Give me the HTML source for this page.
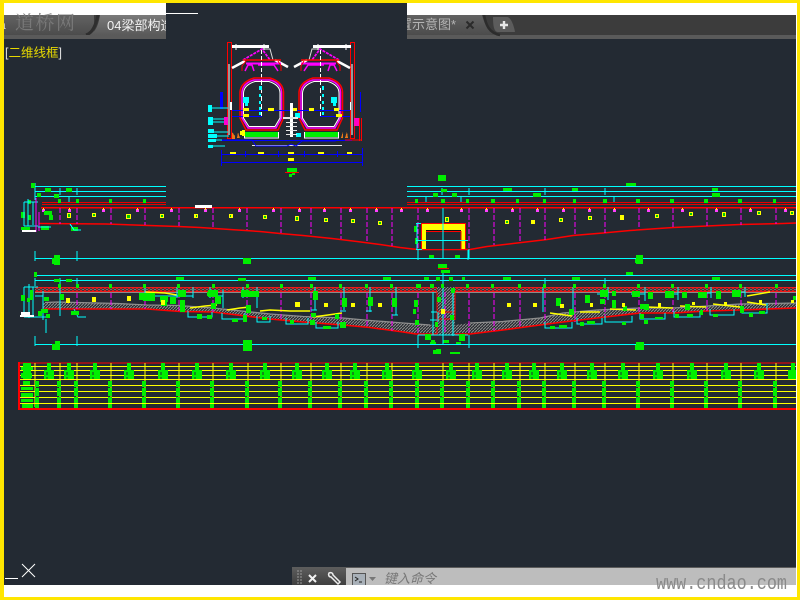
<!DOCTYPE html>
<html lang="zh">
<head>
<meta charset="utf-8">
<title>CAD</title>
<style>
html,body{margin:0;padding:0;width:800px;height:600px;overflow:hidden;background:#232a33}
svg{display:block;position:absolute;left:0;top:0}
</style>
</head>
<body>
<svg width="800" height="600" viewBox="0 0 800 600" xmlns="http://www.w3.org/2000/svg" fill="none">
<defs>
<linearGradient id="tab" x1="0" y1="0" x2="0" y2="1"><stop offset="0" stop-color="#7a7a7a"/><stop offset="1" stop-color="#5a5a5a"/></linearGradient>
<linearGradient id="tab2" x1="0" y1="0" x2="0" y2="1"><stop offset="0" stop-color="#626262"/><stop offset="1" stop-color="#4c4c4c"/></linearGradient>
<linearGradient id="cmd" x1="0" y1="0" x2="0" y2="1"><stop offset="0" stop-color="#5c5c5c"/><stop offset="1" stop-color="#3f3f3f"/></linearGradient>
<pattern id="ha" width="4" height="2" patternUnits="userSpaceOnUse"><rect width="4" height="2" fill="#4a3036"/><rect width="2" height="1" fill="#d02020"/><rect x="2" y="1" width="2" height="1" fill="#6e6e6e"/></pattern>
<pattern id="hb" width="3" height="3" patternUnits="userSpaceOnUse"><rect width="3" height="3" fill="#2a2d33"/><path d="M0 3L3 0" stroke="#8a8a8a" stroke-width="1"/></pattern>
</defs>

<!-- tab bar -->
<rect x="4" y="15" width="793" height="24" fill="#3c3c3c"/>
<rect x="4" y="15" width="90" height="20" fill="url(#tab2)"/>
<path d="M85 35C94 35 98 28 100 15H166V35Z" fill="url(#tab)"/>
<path d="M86 35C93 33 96 24 98 15" stroke="#2e2e2e" stroke-width="3"/>
<rect x="4" y="35" width="793" height="4" fill="#5a5a5a"/>
<path d="M400 15H482C485 25 488 33 497 35H400Z" fill="url(#tab2)"/>
<path d="M484 15C486 25 489 33 500 35" stroke="#2c2c2c" stroke-width="2.500"/>
<path d="M493 17H507C511 17 514 26 515 32H498C494 32 493 26 493 17Z" fill="#5c5c5c"/>
<path d="M504 21v8M500 25h8" stroke="#e6e6e6" stroke-width="2.400"/>
<path d="M466.500 21.500l7 7M473.500 21.500l-7 7" stroke="#2a2a2a" stroke-width="2"/>
<text x="-1" y="29" fill="#ddd" font-size="12" font-family="Liberation Sans,Noto Sans CJK SC,sans-serif">a</text>
<text x="107" y="30" fill="#f2f2f2" font-size="13" font-family="Liberation Sans,Noto Sans CJK SC,sans-serif">04梁部构造</text>
<text x="456" y="29" text-anchor="end" fill="#b4b4b4" font-size="13" font-family="Liberation Sans,Noto Sans CJK SC,sans-serif">布置示意图*</text>

<!-- view label -->
<text x="5" y="57" fill="#ddd" font-size="12.500" font-family="Liberation Sans,Noto Sans CJK SC,sans-serif">[<tspan fill="#e6d800">二维线框</tspan>]</text>

<g shape-rendering="crispEdges">
<!-- top elevation -->
<path d="M35 186.500H800M35 191.500H800M35 196.500H800" stroke="#00ffff"/>
<path d="M35 183V200M60 188V195M77 188V195M69 197V203M442 188V195M469 188V195M426 197V203M461 197V203M545 188V195M605 188V195M614 197V203" stroke="#00ffff"/>
<path d="M42 202.500H797M42 204.500H797" stroke="#e60000"/>
<path d="M41 207.500H797" stroke="#ff0000" stroke-width="1.500"/>
<path d="M39 223.500L106 224L149 225.500L178 226.500L200 227.500L230 229.500L260 231.500L280 233.500L303 235.500L332 238.500L357 241.500L380 244.500L400 247.500L417 249.500H470L487 246.500L513 243.500L547 239.500L573 235.500L603 233L630 230.500L673 227.500L707 226L740 224.500L783 223.500L796 223" stroke="#ff0000" stroke-width="1.500" shape-rendering="auto"/>
<path d="M60 208V224M77 208V224M111 208V224M145 208V225M179 208V226M213 208V228M247 208V230M281 208V233M311 208V236M341 208V239M367 208V242M392 208V246M418 208V249M443 208V249M469 208V249M494 208V245M520 208V242M545 208V240M575 208V236M605 208V233M639 208V229M673 208V227M707 208V226M741 208V225M776 208V224" stroke="#ff00ff" stroke-dasharray="5 2"/>
<!-- bolt dots -->
<path d="M42 209h3v3h-3zM68 209h3v3h-3zM102 209h3v3h-3zM136 209h3v3h-3zM170 209h3v3h-3zM204 209h3v3h-3zM238 209h3v3h-3zM272 209h3v3h-3zM298 209h3v3h-3zM323 209h3v3h-3zM349 209h3v3h-3zM375 209h3v3h-3zM400 209h3v3h-3zM426 209h3v3h-3zM460 209h3v3h-3zM485 209h3v3h-3zM511 209h3v3h-3zM536 209h3v3h-3zM562 209h3v3h-3zM588 209h3v3h-3zM613 209h3v3h-3zM647 209h3v3h-3zM681 209h3v3h-3zM715 209h3v3h-3zM749 209h3v3h-3zM784 209h3v3h-3z" fill="#ff40ff"/>
<path d="M43 208h1v2h-1zM69 208h1v2h-1zM103 208h1v2h-1zM137 208h1v2h-1zM171 208h1v2h-1zM205 208h1v2h-1zM239 208h1v2h-1zM273 208h1v2h-1zM299 208h1v2h-1zM324 208h1v2h-1zM350 208h1v2h-1zM376 208h1v2h-1zM401 208h1v2h-1zM427 208h1v2h-1zM461 208h1v2h-1zM486 208h1v2h-1zM512 208h1v2h-1zM537 208h1v2h-1zM563 208h1v2h-1zM589 208h1v2h-1zM614 208h1v2h-1zM648 208h1v2h-1zM682 208h1v2h-1zM716 208h1v2h-1zM750 208h1v2h-1zM785 208h1v2h-1z" fill="#ffff00"/>
<!-- yellow squares -->
<path d="M67 213h4v5h-4zM92 213h4v4h-4zM126 214h5v5h-5zM160 214h4v4h-4zM194 214h4v4h-4zM229 214h4v4h-4zM263 215h4v4h-4zM295 216h4v5h-4zM324 218h4v4h-4zM351 219h4v4h-4zM378 221h4v4h-4zM445 217h4v5h-4zM505 220h4v4h-4zM531 220h4v4h-4zM559 218h4v4h-4zM588 216h4v4h-4zM620 215h4v5h-4zM655 214h4v4h-4zM689 212h4v4h-4zM722 212h4v5h-4zM757 211h4v4h-4zM790 211h4v4h-4z" fill="#ffff00"/>
<path d="M68 214h2v3h-2zM93 214h2v2h-2zM127 215h3v3h-3zM161 215h2v2h-2zM196 215h1v2h-1zM230 215h1v2h-1zM264 216h2v2h-2zM296 217h2v3h-2zM325 219h2v2h-2zM352 220h2v2h-2zM379 222h2v2h-2zM446 218h2v3h-2zM506 221h2v2h-2zM560 219h2v2h-2zM589 217h2v2h-2zM656 215h2v2h-2zM690 213h2v2h-2zM723 213h2v3h-2zM758 212h2v2h-2zM791 212h2v2h-2z" fill="#00c800"/>
<!-- top tick tags -->
<path d="M58 199h3v4h-3zM76 199h3v4h-3zM109 199h3v4h-3zM143 199h3v4h-3zM415 199h3v4h-3zM441 199h4v4h-4zM466 199h3v4h-3zM491 199h4v4h-4zM516 199h3v4h-3zM543 199h3v4h-3zM573 199h3v4h-3zM603 199h4v4h-4zM636 199h4v4h-4zM670 199h4v4h-4zM704 199h4v4h-4zM738 199h4v4h-4zM773 199h3v4h-3z" fill="#00ee00"/>
<!-- top green labels -->
<path d="M45 188h6v4h-6zM66 188h6v4h-6zM37 193h4v4h-4zM54 194h5v4h-5zM31 183h4v5h-4zM44 211h8v4h-8zM49 215h4v5h-4zM41 226h8v4h-8zM71 227h7v4h-7zM21 212h4v6h-4zM28 215h3v5h-3zM21 227h9v3h-9zM28 200h3v4h-3zM438 175h8v6h-8zM441 189h6v3h-6zM433 193h5v4h-5zM452 193h5v4h-5zM503 188h9v3h-9zM533 193h8v4h-8zM626 183h10v3h-10zM572 188h6v3h-6zM533 193h8v4h-8zM712 188h6v3h-6zM712 193h8v4h-8zM414 226h3v6h-3zM415 238h3v6h-3zM424 237h3v4h-3zM444 237h5v3h-5zM461 237h3v4h-3z" fill="#00ee00"/>
<path d="M24 202V226M33 202V225M24 202h14M24 226h14M28 199V226" stroke="#00ffff"/>
<path d="M36 198V232M39 212V231" stroke="#ff00ff"/>
<path d="M38 227h13M70 224l4 6h7" stroke="#00ffff"/>
<rect x="22" y="230" width="14" height="2" fill="#fff"/>
<path d="M190 197h3v5h-2zM195 205h17v3h-17z" fill="#fff"/>

<!-- gate -->
<rect x="422" y="224" width="43" height="25" fill="#ffff00"/>
<rect x="426" y="232" width="35" height="17" fill="#232a33"/>
<path d="M421.500 223.500H465.500V249.500H421.500ZM426 231.500H461V249" stroke="#ff0000"/>
<path d="M426 230.500H461" stroke="#111"/>
<path d="M416 240.500H468M417 224V250M416 223.500h5M416 249.500h6M443 208V258M469 249V258" stroke="#00ffff"/>

<!-- dim 1 -->
<path d="M35 258.500H800" stroke="#00ffff"/>
<path d="M35 251V261M77 251V261M418 250V260M468 250V260" stroke="#00ffff"/>
<path d="M54 255h6v10h-6zM52 258h8v6h-8zM243 258h8v6h-8zM429 255h5v3h-5zM455 255h5v3h-5zM636 255h7v9h-7zM635 259h8v4h-8zM438 264h9v4h-9zM441 270h9v3h-9z" fill="#00ee00"/>
<path d="M438 268.500h11" stroke="#ff0000"/>

<!-- section band -->
<rect x="35" y="287" width="762" height="5" fill="url(#ha)"/>
<path d="M35 287.500H797M35 291.500H797" stroke="#ee1818"/>
<path d="M35 292.500H797" stroke="#8a8a8a"/>
<path d="M35 275.500H800M35 280.700H800" stroke="#00ffff"/>
<path d="M35 278V286M60 278V284M77 278V284M443 273V283M545 278V284M605 278V284" stroke="#00ffff"/>
<!-- bottom hatch -->
<g shape-rendering="auto">
<path d="M43 302L118 303.500L147 305L178 305.500L213 308L270 314L303 316.500L343 318L370 320.500L403 323L437 325V335H455V325L470 323L503 321.500L540 318L563 313L597 310L640 308L673 308L707 306L740 304L796 303V308L740 310L707 311L673 313L640 313L597 318L563 322L540 325L503 330L470 333H403V332L370 327.500L343 325L303 322L270 319L213 312L180 311.500L147 309H43Z" fill="url(#hb)"/>
<path d="M43 309L147 309L180 311.500L213 312L270 319L303 322L343 325L370 327.500L403 332L416 334H470L503 330L540 325L563 322L597 318L640 313L673 313L707 311L740 310L796 308" stroke="#ff0000" stroke-width="1.600"/>
<path d="M45 302.500L57 302L118 303.500L147 305L178 305.500L213 308L270 314L303 316.500L343 318L370 320.500L403 323L430 325M470 323L503 321.500L540 318L563 313L597 310L640 308L673 308L707 306L740 304L796 303" stroke="#8e8e8e" stroke-width="1.300"/>
</g>
<!-- center pier -->
<rect x="437" y="287" width="18" height="48" fill="url(#hb)"/>
<path d="M437 292V335M455 292V320M437 312h18M437 319h18" stroke="#ff0000"/>
<path d="M433 292V335M443 280V345M453 292V336M437 312h-6M437 320h-7M418 335h50M438 312V322" stroke="#00ffff"/>
<path d="M445 292V334" stroke="#ff00ff" stroke-dasharray="5 2"/>
<rect x="441" y="309" width="4" height="5" fill="#ffff00"/>

<!-- section magenta -->
<path d="M60 293V310M77 293V309M111 293V309M145 293V309M179 293V311M213 293V312M247 293V316M281 293V320M311 293V322M341 293V325M367 293V327M392 293V331M418 293V334M469 293V333M494 293V331M520 293V327M545 293V325M575 293V322M605 293V318M639 293V313M673 293V313M707 293V311M741 293V310M776 293V308" stroke="#ff00ff" stroke-dasharray="5 2"/>
<!-- section yellow -->
<g shape-rendering="auto"><path d="M145 292L165 293L177 295M190 308L205 306L217 305M227 310L240 308L250 307M260 311L270 310L290 311L310 311M313 317L328 315L342 313M550 313L572 316M580 312L600 312M610 309L636 310M647 307L673 308M680 306L706 307M713 304L740 307M747 302L766 305M747 296L770 292" stroke="#ffff00" stroke-width="1.500"/></g>
<!-- section cyan -->
<path d="M24 287V317M33 287V317M24 287h14M24 317h14M29 284V318M38 317h12M46 319V333M74 309l4 8h8M145 287V298M149 296h28M177 287V298M193 287V298M177 296h16M210 287V298M210 296h13M223 290V308M243 287V298M243 296h14M257 287V308M188 311V317h24V312M222 313V319h23V313M257 316V322h13V316M286 318V324h22V318M316 322V328h22V322M315 287V310M344 287V310M370 287V312M396 287V315M597 294h11M608 287V300M631 294h14M645 287V301M665 294h13M678 287V300M698 293h13M711 287V298M732 292h13M745 287V297M543 287V312M573 287V310M545 322V328h27V322M577 318V324h25V318M605 316V322h27V316M640 313V319h25V313M674 311V317h26V311M710 309V315h24V309M742 307V313h25V303M311 310h6M340 311h6M366 311h6M392 315h6" stroke="#00ffff"/>
<path d="M35 296h8M43 291V320M60 288V316" stroke="#00ffff"/>
<!-- section green -->
<path d="M54 279h6v3h-6zM66 279h6v3h-6zM34 272h3v5h-3zM238 278h8v3h-8zM176 277h8v3h-8zM308 277h8v3h-8zM383 277h8v3h-8zM424 277h5v3h-5zM436 277h4v4h-4zM449 277h4v4h-4zM462 277h3v3h-3zM503 277h8v3h-8zM626 272h7v3h-7zM572 277h8v3h-8zM712 277h8v3h-8zM58 284h3v4h-3zM76 284h3v4h-3zM109 284h3v4h-3zM143 284h3v4h-3zM177 284h3v4h-3zM212 284h3v4h-3zM246 284h3v4h-3zM280 284h3v4h-3zM310 284h3v4h-3zM339 284h3v4h-3zM365 284h3v4h-3zM390 284h3v4h-3zM416 284h5v4h-5zM430 284h4v4h-4zM441 284h3v4h-3zM466 284h3v4h-3zM491 284h3v4h-3zM518 284h3v4h-3zM543 284h3v4h-3zM573 284h3v4h-3zM603 284h3v4h-3zM637 284h3v4h-3zM671 284h3v4h-3zM705 284h3v4h-3zM739 284h3v4h-3zM775 284h3v4h-3z" fill="#00ee00"/>
<path d="M21 295h4v6h-4zM30 290h3v10h-3zM27 298h3v4h-3zM44 297h5v4h-5zM41 309h7v4h-7zM46 314h4v4h-4zM38 311h4v5h-4zM60 294h4v6h-4zM71 311h8v4h-8zM139 293h7v7h-7zM143 293h12v8h-12zM160 296h8v6h-8zM178 290h8v7h-8zM161 300h6v6h-6zM170 297h6v7h-6zM180 300h5v12h-5zM208 290h10v7h-10zM215 296h6v8h-6zM241 290h8v7h-8zM249 291h10v6h-10zM197 314h5v5h-5zM207 315h5v4h-5zM211 303h5v6h-5zM232 319h6v3h-6zM243 315h4v7h-4zM262 317h5v3h-5zM207 292h4v4h-4zM246 305h5v8h-5zM313 291h5v9h-5zM342 298h5v9h-5zM368 297h5v9h-5zM392 298h5v9h-5zM290 320h4v4h-4zM310 320h5v5h-5zM323 326h8v3h-8zM340 322h6v6h-6zM311 313h5v4h-5zM335 314h4v5h-4zM414 300h4v7h-4zM413 309h3v5h-3zM437 297h4v5h-4zM451 288h4v5h-4zM435 322h3v5h-3zM450 315h4v5h-4zM415 320h4v5h-4zM425 334h6v6h-6zM459 334h6v7h-6zM431 340h4v3h-4zM433 350h4v4h-4zM430 342h6v2h-6zM443 340h6v3h-6zM456 342h5v2h-5zM556 298h5v8h-5zM585 295h5v8h-5zM600 290h8v7h-8zM632 291h8v6h-8zM665 291h9v7h-9zM698 292h9v6h-9zM732 290h9v7h-9zM612 291h4v5h-4zM612 300h4v8h-4zM648 292h5v7h-5zM682 292h5v6h-5zM716 291h5v8h-5zM644 304h5v6h-5zM685 304h5v6h-5zM623 306h4v5h-4zM569 309h5v6h-5zM600 299h5v5h-5zM640 304h5v5h-5zM550 326h5v3h-5zM559 325h8v3h-8zM580 322h4v4h-4zM587 321h8v3h-8zM622 322h4v3h-4zM640 314h4v5h-4zM655 317h8v2h-8zM644 320h4v4h-4zM675 314h4v4h-4zM687 314h6v3h-6zM713 314h5v3h-5zM700 310h3v5h-3zM740 306h4v7h-4zM749 313h4v4h-4zM759 311h6v3h-6zM793 296h4v4h-4z" fill="#00ee00"/>
<path d="M66 298h4v5h-4zM92 297h4v5h-4zM127 296h4v5h-4zM161 300h4v5h-4zM295 302h5v5h-5zM324 303h4v4h-4zM351 303h4v4h-4zM378 303h4v4h-4zM507 303h4v4h-4zM533 303h4v4h-4zM560 304h4v4h-4zM590 303h3v4h-3zM622 303h3v4h-3zM658 303h3v4h-3zM692 302h3v3h-3zM724 302h3v4h-3zM759 300h3v4h-3zM791 300h3v3h-3z" fill="#ffff00"/>
<rect x="21" y="312" width="9" height="3" fill="#fff"/>
<rect x="20" y="315" width="14" height="2" fill="#fff"/>

<!-- dim 2 -->
<path d="M35 344.500H800" stroke="#00ffff"/>
<path d="M35 336V346M77 336V346M418 335V348M443 335V345M469 335V348" stroke="#00ffff"/>
<path d="M52 344h8v6h-8zM55 341h5v4h-5zM243 340h9v11h-9zM636 342h8v8h-8zM635 345h5v5h-5zM436 349h5v5h-5zM450 352h10v2h-10z" fill="#00ee00"/>

<!-- table -->
<path d="M19 363H797" stroke="#ff0000"/>
<rect x="18" y="362" width="2" height="48" fill="#ff0000"/>
<rect x="18" y="408" width="779" height="2" fill="#ff0000"/>
<path d="M20 366.500H797M20 370.500H797M20 375.500H797M20 379.500H797M20 385.500H797M20 391.500H797M20 397.500H797M20 403.500H797" stroke="#ffff00"/>
<path d="M35 363V407M60 363V407M77 363V407M111 363V407M145 363V407M179 363V407M213 363V407M248 363V407M281 363V407M311 363V407M341 363V407M367 363V407M392 363V407M418 363V407M443 363V407M469 363V407M494 363V407M520 363V407M545 363V407M575 363V407M605 363V407M639 363V407M673 363V407M707 363V407M741 363V407M776 363V407" stroke="#ffff00"/>
<!-- table upper green -->
<path d="M49 363v16M69 363v16M95 363v16M129 363v16M163 363v16M197 363v16M231 363v16M265 363v16M297 363v16M327 363v16M355 363v16M387 363v16M417 363v16M451 363v16M477 363v16M507 363v16M534 363v16M562 363v16M592 363v16M623 363v16M658 363v16M692 363v16M726 363v16M759 363v16M793 363v16" stroke="#00ee00" stroke-width="4"/>
<path d="M44 370h10v9h-10zM64 370h10v9h-10zM90 370h10v9h-10zM124 370h10v9h-10zM158 370h10v9h-10zM192 370h10v9h-10zM226 370h10v9h-10zM260 370h10v9h-10zM292 370h10v9h-10zM322 370h10v9h-10zM350 370h10v9h-10zM382 370h10v9h-10zM412 370h10v9h-10zM446 370h10v9h-10zM472 370h10v9h-10zM502 370h10v9h-10zM529 370h10v9h-10zM557 370h10v9h-10zM587 370h10v9h-10zM618 370h10v9h-10zM653 370h10v9h-10zM687 370h10v9h-10zM721 370h10v9h-10zM754 370h10v9h-10zM788 370h8v9h-8z" fill="#00ee00"/>
<path d="M47 372v7M67 372v7M93 372v7M127 372v7M161 372v7M195 372v7M229 372v7M263 372v7M295 372v7M325 372v7M353 372v7M385 372v7M415 372v7M449 372v7M475 372v7M505 372v7M532 372v7M560 372v7M590 372v7M621 372v7M656 372v7M690 372v7M724 372v7M757 372v7" stroke="#232a33" stroke-dasharray="3 2"/>
<!-- table left labels -->
<path d="M23 363h8v16h-8zM21 367h12v3h-12zM21 373h11v5h-11zM23 381h7v4h-7zM21 387h12v3h-12zM21 393h12v4h-12zM21 399h12v3h-12zM22 404h11v4h-11z" fill="#00ee00"/>
<!-- table lower green -->
<path d="M37 381v27M59 381v27M76 381v27M110 381v27M144 381v27M178 381v27M212 381v27M247 381v27M280 381v27M310 381v27M340 381v27M366 381v27M391 381v27M417 381v27M442 381v27M468 381v27M493 381v27M519 381v27M544 381v27M574 381v27M604 381v27M638 381v27M672 381v27M706 381v27M740 381v27M775 381v27" stroke="#00ee00" stroke-width="4" stroke-dasharray="6 1 8 1 6 1"/>

<!-- covering dark block -->
<rect x="166" y="4" width="241" height="201" fill="#232a33"/>
<rect x="166" y="13" width="32" height="1" fill="#fff"/>

<!-- upper cross-section drawing -->
<path d="M227.500 42.500H231.500V138.500H227.500ZM350.500 42.500H354.500V138.500H350.500Z" stroke="#ff0000" stroke-width="1.300"/>
<rect x="232" y="45" width="37" height="3" fill="#fff"/>
<rect x="313" y="45" width="38" height="3" fill="#fff"/>
<path d="M236 44v6M264 44v6M318 44v6M346 44v6" stroke="#fff"/>
<g shape-rendering="auto">
<path d="M262 49L270 49L273 60M319 49L312 49L309 60" stroke="#ddd"/>
<path d="M243 60L262 49L270 60M339 60L320 49L312 60" stroke="#ff00ff" stroke-width="1.700" stroke-dasharray="3 1"/>
<path d="M232 68L245 61M350 68L337 61M275 60L288 67M307 60L294 67" stroke="#fff" stroke-width="2.500"/>
<path d="M243 60H281M301 60H339" stroke="#ff0000" stroke-width="1.500"/>
<path d="M246 63.500H281M301 63.500H336" stroke="#ff00ff" stroke-width="2"/>
<path d="M242 71V66L246 61M281 71V66L278 61M340 71V66L336 61M301 71V66L304 61" stroke="#ff0000"/>
<path d="M245 71L248 65H252L254 71M278 71L274 65H258M337 71L334 65H330L328 71M304 71L308 65H324" stroke="#ff00ff" stroke-width="1.500"/>
<path d="M261.500 50V80M320.500 50V80" stroke="#fff" stroke-dasharray="4 2"/>
<!-- tubes -->
<path d="M254 78H270Q283 82 283.500 92V118L278 130H246L240 118V92Q241 82 254 78Z" stroke="#ff0000" stroke-width="1.500"/>
<path d="M254 80H270Q281 83 281.500 92V118L276 128H248L242 118V92Q243 83 254 80Z" stroke="#ff00ff" stroke-width="1.500"/>
<path d="M255 81.500H269Q280 85 280 93V118L275 126.500H249L243.500 118V93Q244 85 255 81.500Z" stroke="#fff"/>
<path d="M313 78H329Q342 82 342.500 92V118L337 130H305L299 118V92Q300 82 313 78Z" stroke="#ff0000" stroke-width="1.500"/>
<path d="M313 80H329Q340 83 340.500 92V118L335 128H307L301 118V92Q302 83 313 80Z" stroke="#ff00ff" stroke-width="1.500"/>
<path d="M314 81.500H328Q339 85 339 93V118L334 126.500H308L302.500 118V93Q303 85 314 81.500Z" stroke="#fff"/>
<path d="M261.500 80V118M320.500 80V118" stroke="#fff" stroke-dasharray="5 3"/>
</g>
<path d="M259 86h3v4h-3zM259 94h2v3h-2zM259 101h2v3h-2zM259 107h2v3h-2zM259 112h2v3h-2zM322 86h2v4h-2zM322 94h2v3h-2zM322 101h2v3h-2zM322 107h2v3h-2zM322 112h2v3h-2zM243 97h6v6h-6zM245 103h3v3h-3zM331 97h6v6h-6zM333 103h3v3h-3zM295 113h5v5h-5zM296 133h5v4h-5z" fill="#00ffff"/>
<path d="M232 110.500H350M232 116.500H262M320 116.500H350M221 140.500H352" stroke="#0000ff"/>
<rect x="220" y="92" width="3" height="17" fill="#0000ff"/>
<path d="M360.500 92V112" stroke="#0000ff"/>
<path d="M243 108h6v3h-6zM268 108h6v3h-6zM292 108h5v3h-5zM309 108h5v3h-5zM334 108h5v3h-5zM243 114h6v3h-6zM336 114h6v3h-6zM230 152h6v3h-6zM258 152h6v3h-6zM288 152h6v3h-6zM318 152h6v3h-6zM347 152h5v3h-5zM288 158h6v3h-6zM240 131h3v4h-3z" fill="#ffff00"/>
<path d="M245 132h33v5h-33zM305 132h33v5h-33z" fill="#00ee00"/>
<path d="M244.500 132V138H278.500V132M304.500 132V138H338.500V132" stroke="#fff"/>
<path d="M208 105h4v7h-4zM208 117h5v8h-5zM208 129h6v4h-6zM208 134h9v4h-9zM208 139h8v3h-8zM208 145h5v3h-5z" fill="#00ffff"/>
<path d="M212 108h17M213 119h16M213 122h16M214 132h16M217 136h12M216 140h12M213 146h12" stroke="#00ffff"/>
<path d="M290 103h3v34h-3z" fill="#fff"/>
<path d="M283 117h15v2h-15zM286 122h11v1h-11zM286 126h11v1h-11zM286 130h11v1h-11zM286 134h11v1h-11zM252 145h90v1h-90z" fill="#e6e6e6"/>
<path d="M229 102h3v8h-3zM352 102h-2v8h2z" fill="#fff"/>
<path d="M229 64V135M352 64V135" stroke="#999" stroke-width="2"/>
<rect x="224" y="117" width="4" height="8" fill="#ff00d0"/>
<rect x="354" y="118" width="5" height="8" fill="#ff00c0"/>
<path d="M359.500 118V141M361.500 118V141M345 140H362" stroke="#ff0000"/>
<path d="M232 132l3 4v3h-3zM238 132l2 6h-3zM343 132l-2 6h2zM347 132l-2 6h3z" fill="#e87818"/>
<path d="M242 130h3v6h-3z" fill="#ffff00"/>
<path d="M222 140H252L256 146H287L291 144L296 146L302 141H335L338 140" stroke="#0000ff" shape-rendering="auto"/>
<path d="M221 154.500H362M221 162.500H362" stroke="#0000ff"/>
<path d="M221.500 150V166M362.500 148V166M245.500 151V157M278.500 151V157M304.500 151V157M337.500 151V157" stroke="#0000ff"/>
<path d="M287 168h10v4h-10zM289 174h3v3h-3zM292 173h3v2h-3z" fill="#00ee00"/>
<path d="M285 172.500h14" stroke="#ff0000"/>
</g>

<!-- command line -->
<rect x="292" y="568" width="54" height="17" fill="url(#cmd)"/>
<rect x="346" y="568" width="450" height="17" fill="#bdbdbd"/>
<rect x="292" y="567" width="504" height="1" fill="#5c5c5c"/>
<path d="M298 570v15M301 570v15" stroke="#9a9a9a" stroke-dasharray="2 1"/>
<path d="M309 575l7 7M316 575l-7 7" stroke="#f2f2f2" stroke-width="2"/>
<path d="M329 573c2-1 4 0 4 2l7 7-2 2-7-7c-2 0-3-2-2-4z" stroke="#eee" stroke-width="1.500"/>
<rect x="352.500" y="573.500" width="13" height="12" fill="#a8b0b8" stroke="#555"/>
<path d="M355 577l3 2-3 2M359 582h3" stroke="#222"/>
<path d="M369 577h7l-3.500 4z" fill="#777"/>
<text x="384" y="583" fill="#777" font-size="13" font-style="italic" font-family="Liberation Sans,Noto Sans CJK SC,sans-serif">键入命令</text>

<!-- UCS -->
<path d="M22 564L35 577M35 564L22 577" stroke="#fff" shape-rendering="auto"/>
<rect x="5" y="578" width="13" height="1" fill="#fff"/>

<!-- white bands -->
<rect x="4" y="3" width="162" height="12" fill="#fff"/>
<rect x="407" y="3" width="390" height="12" fill="#fff"/>
<rect x="4" y="585" width="793" height="12" fill="#fff"/>
<rect x="796" y="15" width="1" height="570" fill="#fff"/>

<!-- watermarks -->
<text x="15" y="29" fill="#7c7c7c" fill-opacity=".9" font-size="19" letter-spacing="1.500" font-family="Noto Serif CJK SC,serif">道桥网</text>
<text x="656" y="589" fill="#8a8a8a" font-size="20" textLength="131" lengthAdjust="spacingAndGlyphs" font-family="Liberation Mono,monospace">www.cndao.com</text>

<!-- yellow frame -->
<rect x="0" y="0" width="800" height="3" fill="#ffe600"/>
<rect x="0" y="597" width="800" height="3" fill="#ffe600"/>
<rect x="0" y="0" width="4" height="600" fill="#ffe600"/>
<rect x="797" y="0" width="3" height="600" fill="#ffe600"/>
</svg>
</body>
</html>
